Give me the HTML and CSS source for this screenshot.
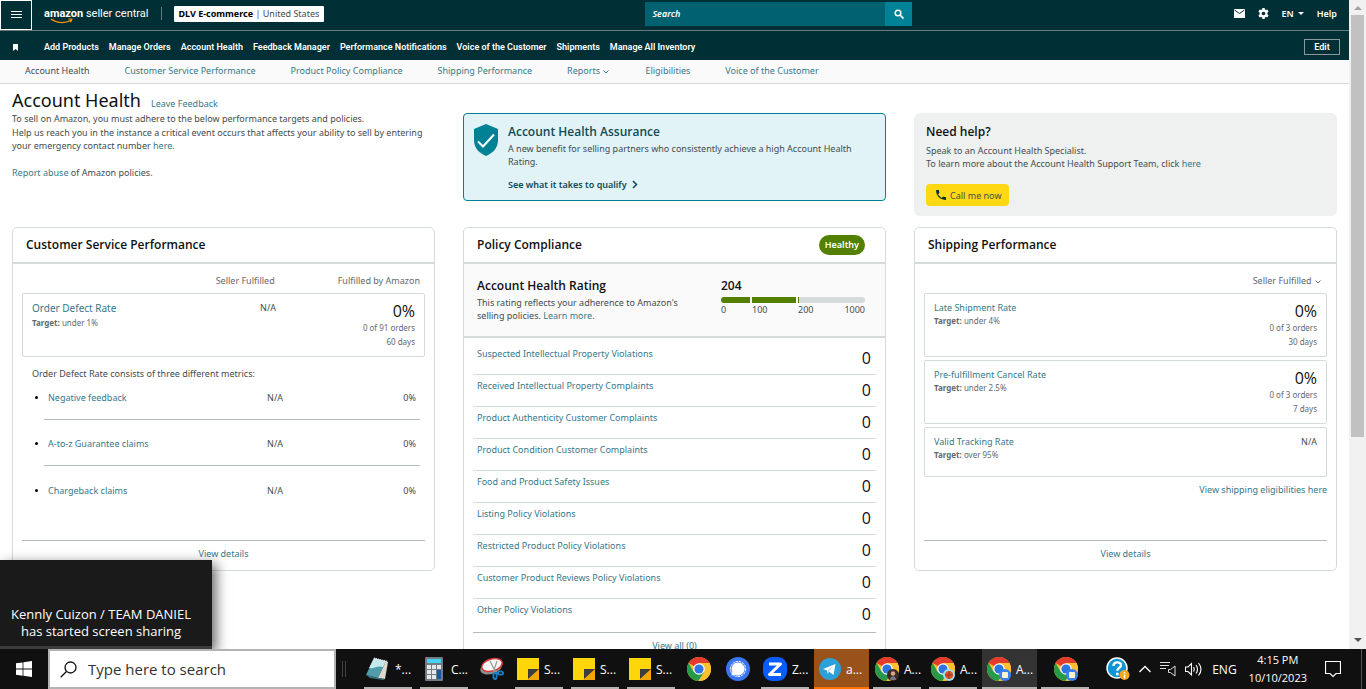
FILE: index.html
```html
<!DOCTYPE html>
<html lang="en">
<head>
    <meta charset="UTF-8">
    <meta name="viewport" content="width=device-width, initial-scale=1.0">
    <title>Account Health</title>
    <link rel="stylesheet" href="styles.css">
</head>
<body>
    <!-- Shared icons -->
    <svg class="sprite" aria-hidden="true">
        <symbol id="chrome" viewBox="0 0 24 24">
            <circle cx="12" cy="12" r="12" fill="#fbc02d"/>
            <path d="M12 12 1.6 6A12 12 0 0 1 22.4 6H12z" fill="#e33b2e"/>
            <path d="M1.6 6A12 12 0 0 0 11.5 24L17.2 15 12 12 6.8 15z" fill="#26994a"/>
            <path d="M12 6h10.4A12 12 0 0 1 11.5 24l5.7-9z" fill="#fbc02d"/>
            <circle cx="12" cy="12" r="5.8" fill="#fff"/>
            <circle cx="12" cy="12" r="4.6" fill="#2c75e2"/>
        </symbol>
        <symbol id="note" viewBox="0 0 22 22">
            <path d="M0 0h22v22H0z" fill="#ffd60a"/>
            <path d="M11 11h11v11H11z" fill="#f0a808"/>
            <path d="M11 11h11L11 21z" fill="#3c3c3c"/>
        </symbol>
        <symbol id="chevron" viewBox="0 0 8 8">
            <path d="M1.500 2.500 4 5l2.500-2.500" fill="none" stroke="currentColor"/>
        </symbol>
    </svg>

    <div class="viewport">
        <div class="page">
            <header class="topbar">
                <button class="menu-btn" aria-label="Menu">
                    <svg width="11" height="8" viewBox="0 0 11 8"><path d="M0 .5h11M0 3.500h11M0 6.500h11" stroke="#fff" stroke-width="1"/></svg>
                </button>
                <a class="logo" href="#">
                    <b>amazon</b> seller central
                    <svg class="smile" width="24" height="6" viewBox="0 0 24 6"><path d="M1 1c6 4.500 14 4.500 20 1.200M18.500 1l3.500.2-1.500 3" fill="none" stroke="#f90" stroke-width="1.200"/></svg>
                </a>
                <button class="account"><b>DLV E-commerce</b> | United States</button>
                <form class="search">
                    <input type="text" placeholder="Search" aria-label="Search">
                    <button type="button" aria-label="Go">
                        <svg width="10" height="10" viewBox="0 0 10 10"><circle cx="4" cy="4" r="2.800" fill="none" stroke="#fff" stroke-width="1.500"/><path d="m6 6 3.500 3.500" stroke="#fff" stroke-width="1.700"/></svg>
                    </button>
                </form>
                <div class="tools">
                    <a href="#" aria-label="Messages"><svg width="11" height="9" viewBox="0 0 11 9"><path d="M0 0h11v9H0z" fill="#fff"/><path d="m.5 1 5 3.500 5-3.500" fill="none" stroke="#002f36"/></svg></a>
                    <a href="#" aria-label="Settings"><svg width="11" height="11" viewBox="0 0 24 24"><path fill="#fff" d="M9.500 0h5l.6 3.400 2.200 1.200L20.500 3.500 23 8l-2.600 2.200v3.600L23 16l-2.500 4.500-3.200-1.200-2.200 1.300-.6 3.400h-5l-.6-3.400-2.200-1.300-3.200 1.200L1 16l2.600-2.200v-3.600L1 8l2.500-4.500 3.200 1.100 2.200-1.200z"/><circle cx="12" cy="12" r="4" fill="#002f36"/></svg></a>
                    <a href="#">EN <i class="caret"></i></a>
                    <a href="#">Help</a>
                </div>
            </header>

            <nav class="favorites">
                <svg class="bookmark" width="5" height="7" viewBox="0 0 5 7"><path d="M0 0h5v7L2.500 5 0 7z" fill="#fff"/></svg>
                <a href="#">Add Products</a>
                <a href="#">Manage Orders</a>
                <a href="#">Account Health</a>
                <a href="#">Feedback Manager</a>
                <a href="#">Performance Notifications</a>
                <a href="#">Voice of the Customer</a>
                <a href="#">Shipments</a>
                <a href="#">Manage All Inventory</a>
                <button class="edit">Edit</button>
            </nav>

            <nav class="tabs">
                <a class="current" href="#">Account Health</a>
                <a href="#">Customer Service Performance</a>
                <a href="#">Product Policy Compliance</a>
                <a href="#">Shipping Performance</a>
                <a href="#">Reports <svg width="8" height="8"><use href="#chevron"/></svg></a>
                <a href="#">Eligibilities</a>
                <a href="#">Voice of the Customer</a>
            </nav>

            <main>
                <div class="columns intro-row">
                    <section class="intro">
                        <div class="title"><h1>Account Health</h1><a href="#">Leave Feedback</a></div>
                        <p>To sell on Amazon, you must adhere to the below performance targets and policies.</p>
                        <p class="contact">Help us reach you in the instance a critical event occurs that affects your ability to sell by entering your emergency contact number <a href="#">here</a>.</p>
                        <p class="spaced"><a href="#">Report abuse</a> of Amazon policies.</p>
                    </section>

                    <section class="assurance">
                        <svg width="24" height="32" viewBox="0 0 24 32"><path d="M12 0 24 5v11c0 8-5 13-12 16C5 29 0 24 0 16V5z" fill="#008296"/><path d="m4 17.500 5 5 11-12" fill="none" stroke="#fff" stroke-width="2"/></svg>
                        <div>
                            <h2>Account Health Assurance</h2>
                            <p>A new benefit for selling partners who consistently achieve a high Account Health Rating.</p>
                            <a class="qualify" href="#">See what it takes to qualify <svg width="6" height="9" viewBox="0 0 6 9"><path d="m1 1 3.500 3.500L1 8" fill="none" stroke="#0f4a55" stroke-width="1.500"/></svg></a>
                        </div>
                    </section>

                    <section class="help">
                        <h2>Need help?</h2>
                        <p>Speak to an Account Health Specialist.<br>To learn more about the Account Health Support Team, click <a href="#">here</a></p>
                        <button class="call">
                            <svg width="10" height="10" viewBox="0 0 18 18"><path fill="#002f36" d="M3.600 7.800a15 15 0 0 0 6.600 6.600l2.200-2.200a1 1 0 0 1 1-.25 11.400 11.400 0 0 0 3.600.6 1 1 0 0 1 1 1V17a1 1 0 0 1-1 1A17 17 0 0 1 0 1a1 1 0 0 1 1-1h3.500a1 1 0 0 1 1 1 11.400 11.400 0 0 0 .6 3.600 1 1 0 0 1-.25 1z"/></svg>
                            Call me now
                        </button>
                    </section>
                </div>

                <div class="columns">
                    <section class="card">
                        <div class="card-head"><h2>Customer Service Performance</h2></div>
                        <div class="card-body">
                            <div class="col-heads"><span>Seller Fulfilled</span><span>Fulfilled by Amazon</span></div>
                            <div class="box">
                                <div><a class="large" href="#">Order Defect Rate</a><small><b>Target:</b> under 1%</small></div>
                                <span class="na">N/A</span>
                                <div class="value"><strong>0%</strong><small>0 of 91 orders</small><small>60 days</small></div>
                            </div>
                            <p class="metrics-note">Order Defect Rate consists of three different metrics:</p>
                            <ul class="metrics">
                                <li><a href="#">Negative feedback</a><span>N/A</span><span>0%</span></li>
                                <li><a href="#">A-to-z Guarantee claims</a><span>N/A</span><span>0%</span></li>
                                <li><a href="#">Chargeback claims</a><span>N/A</span><span>0%</span></li>
                            </ul>
                            <a class="details" href="#">View details</a>
                        </div>
                    </section>

                    <section class="card">
                        <div class="card-head"><h2>Policy Compliance</h2><span class="badge">Healthy</span></div>
                        <div class="rating">
                            <div>
                                <h2>Account Health Rating</h2>
                                <p>This rating reflects your adherence to Amazon's selling policies. <a href="#">Learn more</a>.</p>
                            </div>
                            <div class="score">
                                <h2>204</h2>
                                <div class="meter"><i></i><i></i><i></i></div>
                                <div class="scale"><span>0</span><span>100</span><span>200</span><span>1000</span></div>
                            </div>
                        </div>
                        <div class="card-body">
                            <ul class="policies">
                                <li><a href="#">Suspected Intellectual Property Violations</a><span>0</span></li>
                                <li><a href="#">Received Intellectual Property Complaints</a><span>0</span></li>
                                <li><a href="#">Product Authenticity Customer Complaints</a><span>0</span></li>
                                <li><a href="#">Product Condition Customer Complaints</a><span>0</span></li>
                                <li><a href="#">Food and Product Safety Issues</a><span>0</span></li>
                                <li><a href="#">Listing Policy Violations</a><span>0</span></li>
                                <li><a href="#">Restricted Product Policy Violations</a><span>0</span></li>
                                <li><a href="#">Customer Product Reviews Policy Violations</a><span>0</span></li>
                                <li><a href="#">Other Policy Violations</a><span>0</span></li>
                            </ul>
                            <a class="details" href="#">View all (0)</a>
                        </div>
                    </section>

                    <section class="card">
                        <div class="card-head"><h2>Shipping Performance</h2></div>
                        <div class="card-body">
                            <div class="col-heads"><span>Seller Fulfilled <svg width="8" height="8"><use href="#chevron"/></svg></span></div>
                            <div class="boxes">
                                <div class="box">
                                    <div><a href="#">Late Shipment Rate</a><small><b>Target:</b> under 4%</small></div>
                                    <div class="value"><strong>0%</strong><small>0 of 3 orders</small><small>30 days</small></div>
                                </div>
                                <div class="box">
                                    <div><a href="#">Pre-fulfillment Cancel Rate</a><small><b>Target:</b> under 2.5%</small></div>
                                    <div class="value"><strong>0%</strong><small>0 of 3 orders</small><small>7 days</small></div>
                                </div>
                                <div class="box short">
                                    <div><a href="#">Valid Tracking Rate</a><small><b>Target:</b> over 95%</small></div>
                                    <span>N/A</span>
                                </div>
                            </div>
                            <a class="eligibility" href="#">View shipping eligibilities here</a>
                            <a class="details" href="#">View details</a>
                        </div>
                    </section>
                </div>
            </main>
        </div>

        <div class="scrollbar">
            <i class="arrow up"></i>
            <i class="thumb"></i>
            <i class="arrow down"></i>
        </div>

        <div class="toast"><p>Kennly Cuizon / TEAM DANIEL<br>has started screen sharing</p></div>
    </div>

    <footer class="taskbar">
        <button class="start" aria-label="Start">
            <svg width="16" height="16" viewBox="0 0 16 16"><path fill="#fff" d="M0 2.300 6.600 1.400v6.200H0zM7.400 1.300 16 0v7.600H7.400zM0 8.400h6.600v6.300L0 13.700zM7.400 8.400H16V16l-8.600-1.200z"/></svg>
        </button>
        <label class="taskbar-search">
            <svg width="17" height="17" viewBox="0 0 17 17"><circle cx="10.500" cy="6.500" r="5.500" fill="none" stroke="#111" stroke-width="1.300"/><path d="M6.500 10.500.7 16.300" stroke="#111" stroke-width="1.300"/></svg>
            <input type="text" placeholder="Type here to search">
        </label>
        <div class="grip"></div>
        <div class="apps">
            <button class="app open">
                <svg width="24" height="24" viewBox="0 0 24 24"><path d="m8 1 12 3-8 17-12-3z" fill="#4f9dab"/><path d="m8 1 12 3-3 6C12 8 8 12 3 11z" fill="#c5e9ee"/><path d="m20 4 2 1-3 17-7-1z" fill="#dcd9cd"/><path d="m0 18 12 3 7 1-2 1-13-2z" fill="#3a7480"/><path d="m8 1.500 13 3" stroke="#ddd" stroke-width="1.800" stroke-dasharray="1 1"/></svg>
                *...
            </button>
            <button class="app open">
                <svg width="24" height="24" viewBox="0 0 24 24"><rect x="3" width="18" height="24" rx="1" fill="#707b86"/><path d="M5 2h14v4H5z" fill="#46d3f5"/><path d="M5 8h4v4H5zM10 8h4v4h-4zM15 8h4v4h-4zM5 13h4v4H5zM10 13h4v4h-4zM5 18h4v4H5zM10 18h4v4h-4z" fill="#e6e8ea"/><path d="M15 13h4v9h-4z" fill="#1756a9"/></svg>
                C...
            </button>
            <button class="app" aria-label="Snipping Tool">
                <svg width="24" height="24" viewBox="0 0 24 24"><ellipse cx="11" cy="11" rx="11" ry="6" fill="#8d8d8d" transform="rotate(-16 11 11)"/><ellipse cx="12" cy="8" rx="10.500" ry="6" fill="#f6f6f6" stroke="#d8383a" stroke-width="1.500" transform="rotate(-16 12 8)"/><path d="m10 4 6 12m1-12-4 12" stroke="#999" stroke-width="1.200"/><g fill="none" stroke="#1a7fc4" stroke-width="1.800"><ellipse cx="15" cy="19" rx="1.700" ry="3"/><ellipse cx="20.500" cy="16" rx="2.600" ry="1.700"/><path d="m15 16 4 0"/></g></svg>
            </button>
            <button class="app open"><svg width="22" height="22"><use href="#note"/></svg>S...</button>
            <button class="app open"><svg width="22" height="22"><use href="#note"/></svg>S...</button>
            <button class="app open"><svg width="22" height="22"><use href="#note"/></svg>S...</button>
            <button class="app" aria-label="Chrome"><svg width="24" height="24"><use href="#chrome"/></svg></button>
            <button class="app" aria-label="Signal">
                <svg width="24" height="24" viewBox="0 0 24 24"><circle cx="12" cy="12" r="12" fill="#3a76f0"/><circle cx="12" cy="12" r="7.600" fill="none" stroke="#fff" stroke-dasharray="2.500 .8"/><path d="M12 5.500a6.500 6.500 0 1 1-3 12.200L5.500 18.500 6.300 15A6.500 6.500 0 0 1 12 5.500z" fill="#fff"/></svg>
            </button>
            <button class="app open">
                <svg width="24" height="24" viewBox="0 0 24 24"><rect width="24" height="24" rx="9" fill="#0b5cff"/><path d="M6 7h11.500L6.500 17.500H18" fill="none" stroke="#fff" stroke-width="3" stroke-linejoin="round"/></svg>
                Z...
            </button>
            <button class="app open alert">
                <svg width="22" height="22" viewBox="0 0 22 22"><circle cx="11" cy="11" r="11" fill="#2ba0da"/><path d="m4 11 12.500-5-2 11-4.300-3.200L8.500 15.500 8 12.500z" fill="#fff"/><path d="m8 12.500 6.500-4.500-4.300 5-1.700 2.500z" fill="#b9dcf0"/></svg>
                a...
            </button>
            <button class="app open">
                <svg width="24" height="24" viewBox="0 0 24 24"><use href="#chrome"/><circle cx="18" cy="18" r="6" fill="#3a2a26"/><circle cx="18" cy="16.500" r="2.300" fill="#d9a58a"/><path d="M15 23c0-5 6-5 6 0z" fill="#778"/></svg>
                A...
            </button>
            <button class="app open">
                <svg width="24" height="24" viewBox="0 0 24 24"><use href="#chrome"/><circle cx="18" cy="18" r="6" fill="#9fe0ea"/><circle cx="18" cy="18" r="4" fill="#e5562a"/><path d="M14 18h8M18 14v8" stroke="#7c2a16" stroke-width=".8"/></svg>
                A...
            </button>
            <button class="app open active">
                <svg width="24" height="24" viewBox="0 0 24 24"><use href="#chrome"/><circle cx="18" cy="18" r="6" fill="#3b82f0"/><rect x="15" y="15" width="6" height="6" rx="1" fill="#fff3d0"/></svg>
                A...
            </button>
            <button class="app open wide" aria-label="Chrome">
                <svg width="24" height="24" viewBox="0 0 24 24"><use href="#chrome"/><circle cx="18" cy="18" r="6" fill="#3b82f0"/><rect x="15" y="15" width="6" height="6" rx="1" fill="#fff3d0"/></svg>
            </button>
        </div>
        <div class="tray">
            <svg width="24" height="24" viewBox="0 0 24 24"><circle cx="11" cy="11" r="10" fill="#0e95d3" stroke="#fff" stroke-width="1.500"/><path d="M7.500 9c0-5 7.500-4.500 7.500-.8 0 2.500-3.700 2.600-3.700 5.500" fill="none" stroke="#fff" stroke-width="2.400"/><circle cx="11.300" cy="17" r="1.500" fill="#fff"/><circle cx="18.500" cy="18" r="5" fill="#f6a81c"/><path d="M18.500 15v1.500m0 1v4" stroke="#fff" stroke-width="1.400"/></svg>
            <svg width="12" height="8" viewBox="0 0 12 8"><path d="m.5 7 5.500-5.500L11.500 7" fill="none" stroke="#fff" stroke-width="1.300"/></svg>
            <svg width="16" height="16" viewBox="0 0 16 16"><path d="M0 1.500h10M0 4.500h9M0 7.500h6" stroke="#ddd"/><path d="M8.500 8.500h2L15 5v10l-4.500-3.500h-2z" fill="none" stroke="#ddd"/></svg>
            <svg width="18" height="16" viewBox="0 0 18 16"><path d="M.5 6v4.500H3l3.500 3.500V2.500L3 6zM8.500 6q1.500 2.300 0 4.500M11 4q3 4.200 0 8.500M13.500 2q5 6.200 0 12.500" fill="none" stroke="#fff" stroke-width="1.100"/></svg>
            <span>ENG</span>
            <div class="clock">4:15 PM<br>10/10/2023</div>
            <svg width="16" height="17" viewBox="0 0 16 17"><path d="M.5.500h15v12H11L8 15.500l-3-3H.5z" fill="none" stroke="#fff" stroke-width="1.200"/></svg>
        </div>
    </footer>
</body>
</html>
```
FILE: styles.css
```css
:root {
    --header: #002f36;
    --link: #36798a;
    --text: #444c4e;
    --muted: #636a6c;
    --dark: #0f1111;
    --border: #d5dbdb;
    --line: #b5baba;
    --green: #538000;
}

* {
    box-sizing: border-box;
    margin: 0;
    padding: 0;
}

body {
    height: 100vh;
    display: flex;
    flex-direction: column;
    overflow: hidden;
    font-family: 'Noto Sans', sans-serif;
    font-size: 9px;
    line-height: 13px;
    color: var(--text);
    background: #fff;
}

a {
    color: var(--link);
    text-decoration: none;
}

button,
input {
    font: inherit;
    color: inherit;
    border: none;
    background: none;
}

ul {
    list-style: none;
}

svg {
    flex: none;
}

h1 {
    font-size: 18px;
    line-height: 24px;
    font-weight: 400;
    color: var(--dark);
}

h2 {
    font-family: 'Open Sans', sans-serif;
    font-size: 12px;
    line-height: 16px;
    font-weight: 600;
    color: var(--dark);
}

small {
    display: block;
    font-size: 8px;
    line-height: 14px;
    color: var(--muted);
}

.sprite {
    position: absolute;
    width: 0;
    height: 0;
}

.viewport {
    position: relative;
    flex: 1;
    min-height: 0;
    display: flex;
}

.page {
    flex: 1;
    overflow: hidden;
}

/* Header */
.topbar {
    display: flex;
    align-items: center;
    height: 31px;
    padding-bottom: 3px;
    background: var(--header);
    border-bottom: 1px solid #66797c;
    color: #fff;
}

.menu-btn {
    align-self: flex-start;
    width: 32px;
    height: 30px;
    border: 1px solid #fff;
    display: flex;
    align-items: center;
    justify-content: center;
}

.logo {
    position: relative;
    margin-left: 12px;
    padding-right: 12px;
    border-right: 1px solid #66797c;
    color: #fff;
    font-family: Roboto, sans-serif;
    font-size: 11px;
}

.smile {
    position: absolute;
    left: 6px;
    bottom: -4px;
}

.account {
    margin-left: 12px;
    height: 16px;
    padding: 0 5px;
    background: #fff;
    border-radius: 1px;
    color: var(--text);
}

.account b {
    color: #000;
}

.search {
    display: flex;
    width: 267px;
    height: 24px;
    margin: 0 auto;
}

.search input {
    flex: 1;
    min-width: 0;
    padding: 0 7px;
    background: #006270;
}

.search input::placeholder {
    color: #fff;
    font-style: italic;
    font-weight: 600;
    opacity: 1;
}

.search button {
    width: 27px;
    background: #008296;
    display: flex;
    align-items: center;
    justify-content: center;
}

.tools {
    display: flex;
    align-items: center;
    gap: 13px;
    padding-right: 12px;
    font-weight: 600;
}

.tools a {
    display: flex;
    align-items: center;
    gap: 4px;
    color: #fff;
}

.caret {
    border: 3px solid transparent;
    border-top-color: #fff;
    border-bottom: none;
}

.favorites {
    display: flex;
    align-items: center;
    gap: 10px;
    height: 29px;
    padding: 3px 9px 0 13px;
    background: var(--header);
    font-family: Roboto, sans-serif;
    font-weight: 600;
}

.favorites a {
    color: #fff;
}

.bookmark {
    margin-right: 16px;
}

.edit {
    width: 36px;
    height: 16px;
    margin-left: auto;
    border: 1px solid #8a999b;
    color: #fff;
    line-height: 14px;
}

.tabs {
    display: flex;
    align-items: center;
    gap: 35px;
    height: 24px;
    padding: 0 0 2px 25px;
    background: #fafafa;
    border-bottom: 1px solid #d5d9d9;
}

.tabs .current {
    color: var(--text);
}

/* Top row */
.columns {
    display: grid;
    grid-template-columns: repeat(3, 1fr);
    gap: 28px;
    align-items: start;
    padding: 0 12px;
}

.intro-row {
    padding-top: 4px;
    margin-bottom: 11px;
}

.title {
    display: flex;
    align-items: baseline;
    gap: 10px;
}

.contact {
    margin-top: 1px;
}

.spaced {
    margin-top: 14px;
}

.assurance {
    display: flex;
    gap: 10px;
    height: 88px;
    margin-top: 25px;
    padding: 10px;
    background: #e1f3f7;
    border: 1px solid #008296;
    border-radius: 4px;
}

.assurance h2 {
    color: #0f4a55;
    margin-bottom: 2px;
}

.qualify {
    display: flex;
    align-items: center;
    gap: 5px;
    margin-top: 10px;
    color: #0f4a55;
    font-weight: 600;
}

.help {
    height: 103px;
    margin-top: 25px;
    padding: 11px 12px;
    background: #eff1f1;
    border-radius: 6px;
}

.help h2 {
    margin-bottom: 4px;
}

.call {
    display: flex;
    align-items: center;
    gap: 4px;
    height: 22px;
    margin-top: 14px;
    padding: 0 8px 0 10px;
    background: #ffd814;
    border-radius: 4px;
}

/* Cards */
.card {
    border: 1px solid var(--border);
    border-radius: 5px;
}

.card-head {
    display: flex;
    align-items: center;
    justify-content: space-between;
    height: 36px;
    padding: 0 20px 0 13px;
    border-bottom: 2px solid var(--border);
}

.card-body {
    padding: 0 9px;
}

.badge {
    padding: 3px 6px 4px;
    border-radius: 10px;
    background: var(--green);
    color: #fff;
    font-weight: 600;
}

.col-heads {
    display: flex;
    justify-content: flex-end;
    gap: 63px;
    padding: 10px 5px 6px 0;
    color: var(--muted);
}

.col-heads svg,
.tabs svg {
    vertical-align: middle;
}

.boxes {
    display: grid;
    gap: 3px;
}

.box {
    display: flex;
    justify-content: space-between;
    min-height: 64px;
    padding: 7px 9px;
    border: 1px solid var(--border);
    border-radius: 2px;
}

.box.short {
    min-height: 50px;
}

.box a {
    display: block;
}

.box .large {
    font-size: 10px;
    line-height: 15px;
}

.na {
    margin-left: auto;
}

.value {
    text-align: right;
}

.na + .value {
    width: 139px;
}

.value strong {
    display: block;
    font-family: 'Open Sans', sans-serif;
    font-size: 16px;
    line-height: 20px;
    font-weight: 400;
    color: var(--dark);
}

.metrics-note {
    margin: 10px 10px 0;
}

.metrics {
    margin: 0 5px 28px 22px;
}

.metrics li {
    position: relative;
    display: flex;
    align-items: center;
    height: 46px;
    padding: 2px 4px 0;
    border-bottom: 1px solid var(--line);
}

.metrics li:first-child {
    height: 40px;
    padding: 0 4px 4px;
}

.metrics li:last-child {
    border-bottom: none;
}

.metrics li::before {
    content: '';
    position: absolute;
    left: -9px;
    width: 3px;
    height: 3px;
    border-radius: 50%;
    background: #000;
}

.metrics a {
    flex: 1;
}

.metrics span:last-child {
    width: 133px;
    text-align: right;
}

.details {
    display: block;
    height: 30px;
    padding-top: 6px;
    border-top: 1px solid var(--line);
    text-align: center;
}

.eligibility {
    display: block;
    margin: 6px 0 44px;
    text-align: right;
}

/* Policy compliance */
.rating {
    display: flex;
    justify-content: space-between;
    padding: 14px 20px 14px 13px;
    background: #fafafa;
    border-bottom: 2px solid var(--border);
}

.rating > div:first-child {
    width: 210px;
}

.score {
    width: 144px;
}

.meter,
.scale {
    display: grid;
    grid-template-columns: 31px 46px 1fr;
}

.meter {
    height: 6px;
    margin-top: 3px;
    border-radius: 3px;
    overflow: hidden;
}

.meter i {
    background: var(--green);
    border-right: 2px solid #fff;
}

.meter i:last-child {
    background: var(--border);
    border-left: 1px solid var(--green);
    border-right: none;
}

.scale {
    grid-template-columns: 31px 46px 1fr auto;
}

.rating p {
    margin-top: 2px;
}

.policies {
    padding: 5px 0 1px;
}

.policies li {
    display: flex;
    justify-content: space-between;
    height: 32px;
    padding: 4px 5px 0 4px;
    border-bottom: 1px solid var(--border);
}

.policies li:last-child {
    border-bottom: none;
}

.policies span {
    padding-top: 1px;
    font-family: 'Open Sans', sans-serif;
    font-size: 16px;
    line-height: 20px;
    color: var(--dark);
}

/* Window parts */
.scrollbar {
    width: 17px;
    display: flex;
    flex-direction: column;
    align-items: center;
    background: #f1f1f1;
}

.thumb {
    width: 13px;
    height: 422px;
    margin: 5px 0 auto;
    background: #c1c1c1;
}

.arrow {
    border: 4px solid transparent;
}

.arrow.up {
    margin-top: 2px;
    border-bottom-color: #a3a3a3;
}

.arrow.down {
    margin-bottom: 3px;
    border-top-color: #505050;
}

.toast {
    position: absolute;
    left: 0;
    bottom: 0;
    width: 212px;
    height: 89px;
    padding-top: 46px;
    background: #1a1a1a;
    border-bottom: 3px solid #3c3c3c;
    box-shadow: 4px 4px 12px rgba(0, 0, 0, 0.6);
    color: #fff;
    font-family: 'Open Sans', sans-serif;
    font-size: 13px;
    line-height: 17px;
    text-align: center;
    padding-right: 10px;
}

/* Taskbar */
.taskbar {
    display: flex;
    align-items: center;
    height: 40px;
    background: #101010;
    color: #fff;
    font-family: 'Open Sans', sans-serif;
    font-size: 12px;
    z-index: 1;
}

.start {
    width: 48px;
    height: 40px;
    display: flex;
    align-items: center;
    justify-content: center;
}

.taskbar-search {
    display: flex;
    align-items: center;
    gap: 11px;
    width: 288px;
    height: 40px;
    padding-left: 10px;
    background: #fff;
    border: 2px solid #b3b3b3;
}

.taskbar-search input {
    flex: 1;
    min-width: 0;
    font-size: 15px;
}

.taskbar-search input::placeholder {
    color: #333;
    opacity: 1;
}

.grip {
    width: 4px;
    height: 16px;
    margin: 0 15px 0 6px;
    border: 1px solid #444;
    border-width: 0 1px;
}

.apps {
    display: flex;
    gap: 1px;
}

.app {
    position: relative;
    width: 38px;
    height: 40px;
    display: flex;
    align-items: center;
    justify-content: center;
    gap: 5px;
}

.app.open {
    width: 55px;
    justify-content: flex-start;
    padding-left: 5px;
}

.app.wide {
    justify-content: center;
    padding-left: 0;
}

.app.open::after {
    content: '';
    position: absolute;
    left: 3px;
    right: 4px;
    bottom: 0;
    height: 2px;
    background: #b5b3b0;
}

.app.alert {
    background: #9a521b;
}

.app.active {
    background: #333;
}

.app.alert::after,
.app.active::after {
    left: 0;
    right: 0;
}

.app.alert::after {
    background: #ff7300;
}

.tray {
    display: flex;
    align-items: center;
    gap: 9px;
    margin-left: auto;
    margin-right: 4px;
    padding-right: 20px;
    height: 40px;
    border-right: 1px solid #555;
}

.clock {
    text-align: center;
    font-size: 11px;
    line-height: 18px;
    margin: 0 9px 0 3px;
}
```
